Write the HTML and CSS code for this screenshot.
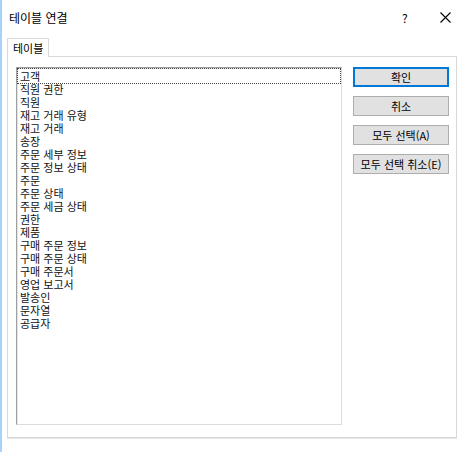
FILE: index.html
```html
<!DOCTYPE html>
<html lang="ko">
<head>
  <meta charset="UTF-8">
  <title>테이블 연결</title>
  <link rel="stylesheet" href="styles.css">
</head>
<body>
  <div class="window">
    <div class="titlebar">
      <span class="title">테이블 연결</span>
      <span class="help">?</span>
      <span class="close">
        <svg width="11" height="11" viewBox="0 0 11 11"><path d="M0.5 0.5 L10.5 10.5 M10.5 0.5 L0.5 10.5" stroke="#000" stroke-width="1.1" fill="none"/></svg>
      </span>
    </div>

    <div class="tabs">
      <div class="tab">테이블</div>
    </div>

    <div class="panel">
      <div class="list">
        <div class="item focus">고객</div>
        <div class="item">직원 권한</div>
        <div class="item">직원</div>
        <div class="item">재고 거래 유형</div>
        <div class="item">재고 거래</div>
        <div class="item">송장</div>
        <div class="item">주문 세부 정보</div>
        <div class="item">주문 정보 상태</div>
        <div class="item">주문</div>
        <div class="item">주문 상태</div>
        <div class="item">주문 세금 상태</div>
        <div class="item">권한</div>
        <div class="item">제품</div>
        <div class="item">구매 주문 정보</div>
        <div class="item">구매 주문 상태</div>
        <div class="item">구매 주문서</div>
        <div class="item">영업 보고서</div>
        <div class="item">발송인</div>
        <div class="item">문자열</div>
        <div class="item">공급자</div>
      </div>
      <div class="buttons">
        <button class="default">확인</button>
        <button>취소</button>
        <button>모두 선택(A)</button>
        <button>모두 선택 취소(E)</button>
      </div>
    </div>
  </div>
</body>
</html>
```

FILE: styles.css
```css
body {
  margin: 0;
  padding: 0;
  background: #fff;
  font-family: "Noto Sans CJK KR", "Liberation Sans", sans-serif;
  font-size: 11px;
  color: #000;
}
.window {
  width: 461px;
  height: 452px;
  border-left: 2px solid #a6d2fb;
  background: #fff;
}
.titlebar {
  height: 34px;
  display: flex;
  align-items: center;
  padding-left: 7px;
}
.title {
  flex: 1;
  font-size: 12px;
}
.help {
  width: 38px;
  font-size: 12px;
}
.close {
  width: 23px;
  display: flex;
  align-items: center;
}
.tabs {
  display: flex;
  padding-left: 5px;
  height: 22px;
}
.tab {
  margin-top: 3px;
  height: 19px;
  border: 1px solid #d9d9d9;
  border-bottom: none;
  background: #fff;
  padding: 0 5px;
  line-height: 18px;
  white-space: nowrap;
  box-sizing: border-box;
  position: relative;
  top: 1px;
}
.panel {
  margin-left: 5px;
  width: 450px;
  height: 382px;
  border: 1px solid #d9d9d9;
  box-shadow: 0 1px 0 #e6e6e6;
  display: flex;
  align-items: flex-start;
  padding: 10px 0 0 8px;
  box-sizing: border-box;
}
.list {
  width: 326px;
  height: 358px;
  box-sizing: border-box;
  border-top: 1px solid #a0a0a0;
  border-left: 1px solid #a0a0a0;
  border-right: 1px solid #dcdcdc;
  border-bottom: 1px solid #dcdcdc;
  box-shadow: inset 1px 1px 0 #e3e3e3;
  padding: 1px 1px 0 1px;
}
.item {
  height: 13px;
  line-height: 13px;
  padding-left: 2px;
  white-space: nowrap;
  color: #111;
}
.item.focus {
  height: 14px;
  line-height: 15px;
  outline: 1px dotted #444;
  outline-offset: 0;
}
.buttons {
  margin-left: 11px;
  display: flex;
  flex-direction: column;
  gap: 9px;
  margin-top: 0;
}
.buttons button {
  width: 96px;
  height: 20px;
  background: #e1e1e1;
  border: 1px solid #adadad;
  font-family: "Noto Sans CJK KR", "Liberation Sans", sans-serif;
  font-size: 11px;
  line-height: 16px;
  padding: 0;
  color: #000;
}
.buttons button.default {
  border: 1px solid #0078d7;
  box-shadow: inset 0 0 0 1px #0078d7;
}
```
